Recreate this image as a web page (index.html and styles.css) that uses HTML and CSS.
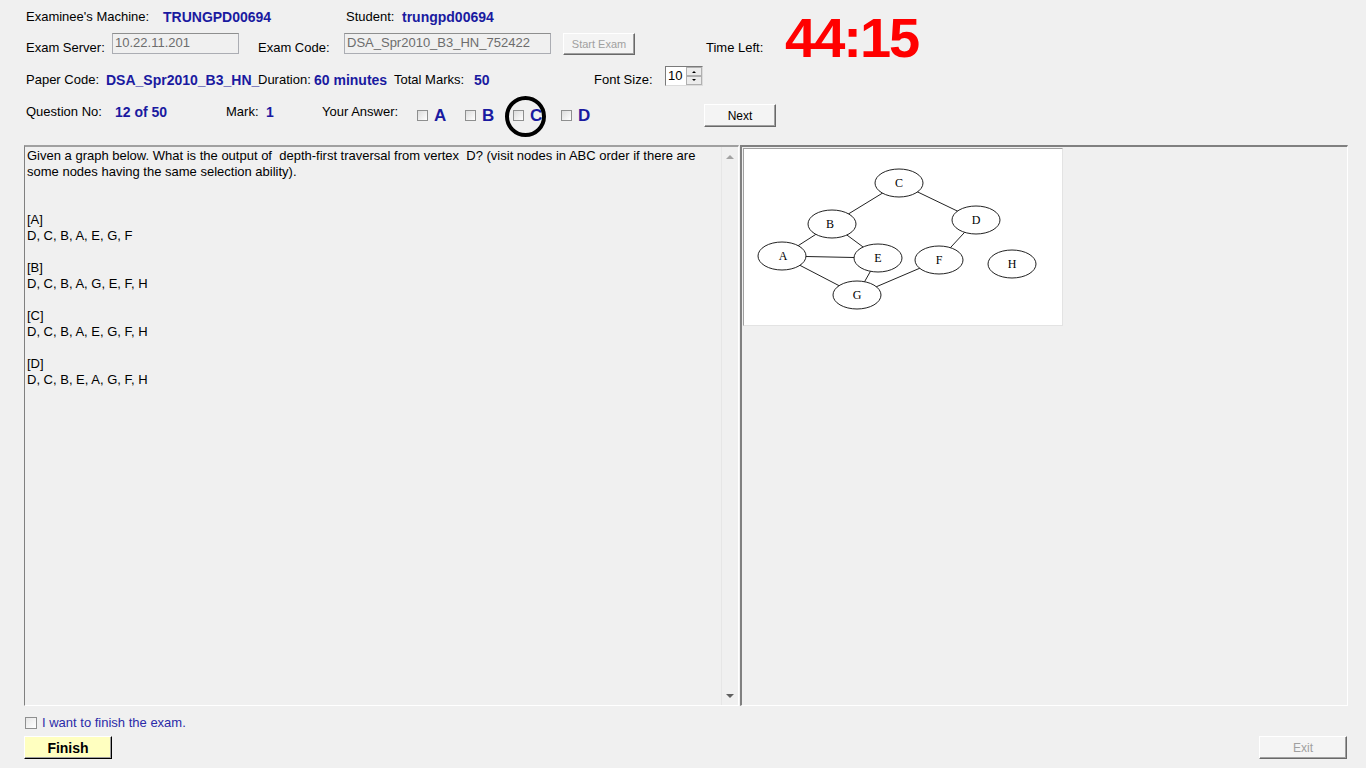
FILE: index.html
```html
<!DOCTYPE html>
<html>
<head>
<meta charset="utf-8">
<title>Exam Client</title>
<link rel="stylesheet" href="styles.css">
</head>
<body>
<div class="header">
  <div class="top">
    <div class="top-left">
      <div class="row r1">
        <span class="lbl w137">Examinee's Machine:</span>
        <span class="val w183">TRUNGPD00694</span>
        <span class="lbl w56">Student:</span>
        <span class="val">trungpd00694</span>
      </div>
      <div class="row r2">
        <span class="lbl low w86">Exam Server:</span>
        <span class="field w127">10.22.11.201</span>
        <span class="lbl low w86 ml19">Exam Code:</span>
        <span class="field w207">DSA_Spr2010_B3_HN_752422</span>
        <span class="btn btn-disabled w72 ml12">Start Exam</span>
        <span class="lbl low ml71">Time Left:</span>
      </div>
    </div>
    <div class="timer">44:15</div>
  </div>
  <div class="row r3">
    <span class="lbl low6 w80">Paper Code:</span>
    <span class="val low6 w152">DSA_Spr2010_B3_HN_</span>
    <span class="lbl low6 w56">Duration:</span>
    <span class="val low6 w80">60 minutes</span>
    <span class="lbl low6 w80">Total Marks:</span>
    <span class="val low6 w120">50</span>
    <span class="lbl low6 w71">Font Size:</span>
    <span class="spinner"><span class="spin-val">10</span><span class="spin-btns"><span class="spin-up"></span><span class="spin-down"></span></span></span>
  </div>
  <div class="row r4">
    <span class="lbl w89">Question No:</span>
    <span class="val w111">12 of 50</span>
    <span class="lbl w40">Mark:</span>
    <span class="val w56">1</span>
    <span class="lbl w95">Your Answer:</span>
    <span class="answer"><span class="cb"></span><span class="letter">A</span></span>
    <span class="answer"><span class="cb"></span><span class="letter">B</span></span>
    <span class="answer marked"><span class="cb"></span><span class="letter">C</span><span class="ring"></span></span>
    <span class="answer"><span class="cb"></span><span class="letter">D</span></span>
    <span class="btn w72 h23 ml95">Next</span>
  </div>
</div>

<div class="main">
  <div class="question">
    <div class="qtext">
      <p>Given a graph below. What is the output of&nbsp; depth-first traversal from vertex&nbsp; D? (visit nodes in ABC order if there are<br>some nodes having the same selection ability).</p>
      <p class="gap2">[A]<br>D, C, B, A, E, G, F</p>
      <p class="gap1">[B]<br>D, C, B, A, G, E, F, H</p>
      <p class="gap1">[C]<br>D, C, B, A, E, G, F, H</p>
      <p class="gap1">[D]<br>D, C, B, E, A, G, F, H</p>
    </div>
    <div class="scrollbar">
      <span class="arr-up"></span>
      <span class="arr-down"></span>
    </div>
  </div>
  <div class="picture">
    <div class="image">
      <svg width="318" height="176" viewBox="0 0 318 176" xmlns="http://www.w3.org/2000/svg">
        <g stroke="#222" stroke-width="1" fill="none">
          <line x1="155" y1="34" x2="88" y2="75"/>
          <line x1="155" y1="34" x2="232" y2="71"/>
          <line x1="88" y1="75" x2="38" y2="107"/>
          <line x1="88" y1="75" x2="134" y2="109"/>
          <line x1="38" y1="107" x2="134" y2="109"/>
          <line x1="38" y1="107" x2="113" y2="146"/>
          <line x1="134" y1="109" x2="113" y2="146"/>
          <line x1="232" y1="71" x2="195" y2="111"/>
          <line x1="195" y1="111" x2="113" y2="146"/>
        </g>
        <g stroke="#222" stroke-width="1" fill="#fff">
          <ellipse cx="155" cy="34" rx="24" ry="14"/>
          <ellipse cx="88" cy="75" rx="24" ry="14"/>
          <ellipse cx="232" cy="71" rx="24" ry="14"/>
          <ellipse cx="38" cy="107" rx="24" ry="14"/>
          <ellipse cx="134" cy="109" rx="24" ry="14"/>
          <ellipse cx="195" cy="111" rx="24" ry="14"/>
          <ellipse cx="268" cy="115" rx="24" ry="14"/>
          <ellipse cx="113" cy="146" rx="24" ry="14"/>
        </g>
        <g font-family="'Liberation Serif', serif" font-size="12" fill="#000" text-anchor="middle">
          <text x="155" y="38">C</text>
          <text x="86" y="79">B</text>
          <text x="232" y="75">D</text>
          <text x="39" y="111">A</text>
          <text x="134" y="113">E</text>
          <text x="195" y="115">F</text>
          <text x="268" y="119">H</text>
          <text x="113" y="150">G</text>
        </g>
      </svg>
    </div>
  </div>
</div>

<div class="footer">
  <div class="finish-row">
    <span class="cb cb-big"></span>
    <span class="finish-lbl">I want to finish the exam.</span>
  </div>
  <div class="btn-row">
    <span class="btn finish">Finish</span>
    <span class="btn btn-disabled exit">Exit</span>
  </div>
</div>
</body>
</html>
```

FILE: styles.css
```css
* { box-sizing: border-box; }
html, body {
  margin: 0;
  padding: 0;
  background: #f0f0f0;
  width: 1366px;
  height: 768px;
  overflow: hidden;
  font-family: "Liberation Sans", Arial, sans-serif;
  font-size: 13px;
  color: #000;
}
.header { padding-left: 26px; }
.top { display: flex; height: 56px; align-items: flex-start; }
.top-left { width: 759px; }
.row { display: flex; align-items: flex-start; white-space: nowrap; }
.r1 { margin-top: 9px; height: 16px; }
.r2 { margin-top: 8px; height: 22px; }
.r3 { margin-top: 10px; height: 20px; }
.r4 { margin-top: 18px; height: 23px; }

.lbl, .val { display: block; line-height: 16px; flex: none; }
.val { color: #1a1aa0; font-weight: bold; font-size: 14px; }
.low { margin-top: 7px; }
.low6 { margin-top: 6px; }

.w40 { width: 40px; } .w56 { width: 56px; } .w71 { width: 71px; } .w72 { width: 72px; }
.w80 { width: 80px; } .w86 { width: 86px; } .w89 { width: 89px; } .w95 { width: 95px; }
.w111 { width: 111px; } .w120 { width: 120px; } .w127 { width: 127px; } .w137 { width: 137px; }
.w152 { width: 152px; } .w183 { width: 183px; } .w207 { width: 207px; }
.ml12 { margin-left: 12px; } .ml19 { margin-left: 19px; } .ml71 { margin-left: 71px; } .ml95 { margin-left: 95px; }

.field {
  display: block;
  flex: none;
  height: 21px;
  border: 1px solid #abadb3;
  border-top-color: #8e8f8f;
  background: #f0f0f0;
  color: #6d6d6d;
  padding: 1px 0 0 2px;
  line-height: 16px;
}

.btn {
  display: flex;
  flex: none;
  align-items: center;
  justify-content: center;
  height: 22px;
  font-size: 12px;
  background: #f4f4f4;
  border: 1px solid;
  border-color: #ffffff #696969 #696969 #ffffff;
  box-shadow: inset -1px -1px 0 #a0a0a0;
  color: #000;
}
.h23 { height: 23px; }
.btn-disabled { color: #a0a0a0; font-size: 11px; }

.timer {
  flex: none;
  margin-top: 10px;
  font-size: 56px;
  line-height: 1;
  font-weight: bold;
  color: #ff0000;
  letter-spacing: -2px;
}

.spinner {
  display: flex;
  flex: none;
  width: 38px;
  height: 20px;
  border: 1px solid #7a7a7a;
  border-right-color: #dcdcdc;
  border-bottom-color: #dcdcdc;
  background: #fff;
}
.spin-val { flex: 1; font-size: 13px; line-height: 18px; padding-left: 2px; }
.spin-btns { display: flex; flex-direction: column; width: 16px; }
.spin-up, .spin-down {
  flex: 1;
  background: #ececec;
  border: 1px solid #b0b0b0;
  position: relative;
}
.spin-up::after, .spin-down::after {
  content: "";
  position: absolute;
  left: 5px;
  top: 3px;
  border-left: 2px solid transparent;
  border-right: 2px solid transparent;
}
.spin-up::after { border-bottom: 2px solid #000; }
.spin-down::after { border-top: 2px solid #000; top: 2px; }

.answer { display: flex; flex: none; width: 48px; align-items: flex-start; position: relative; }
.cb {
  display: block;
  flex: none;
  width: 11px;
  height: 11px;
  margin-top: 6px;
  border: 1px solid #8e8f8f;
  background: linear-gradient(135deg, #dcdcdc, #ffffff);
}
.letter {
  margin-left: 6px;
  margin-top: 2px;
  font-size: 17px;
  line-height: 20px;
  font-weight: bold;
  color: #1a1aa0;
}
.ring {
  position: absolute;
  left: -8px;
  top: -8px;
  width: 41px;
  height: 41px;
  border: 4px solid #000;
  border-radius: 50%;
}

.main {
  display: flex;
  margin: 18px 0 0 24px;
  height: 561px;
}
.question {
  display: flex;
  width: 715px;
  height: 561px;
  border-top: 2px solid #a0a0a0;
  border-left: 1px solid #808080;
  border-right: 1px solid #ffffff;
  border-bottom: 1px solid #ffffff;
}
.qtext { flex: 1; padding: 1px 0 0 2px; line-height: 16px; }
.qtext p { margin: 0; }
.qtext .gap2 { margin-top: 32px; }
.qtext .gap1 { margin-top: 16px; }
.scrollbar {
  width: 17px;
  position: relative;
  border-left: 1px solid #e6e6e6;
  background: #f0f0f0;
}
.arr-up, .arr-down {
  position: absolute;
  left: 4px;
  border-left: 4px solid transparent;
  border-right: 4px solid transparent;
}
.arr-up { top: 8px; border-bottom: 4px solid #a3a3a3; }
.arr-down { bottom: 7px; border-top: 4px solid #606060; }

.picture {
  width: 608px;
  height: 561px;
  margin-left: 1px;
  border-top: 2px solid #808080;
  border-left: 2px solid #808080;
  border-right: 1px solid #ffffff;
  border-bottom: 1px solid #ffffff;
}
.image {
  width: 320px;
  height: 178px;
  margin: 1px 0 0 1px;
  background: #fff;
  border-right: 1px solid #e3e3e3;
  border-bottom: 1px solid #e3e3e3;
  border-left: 1px solid #a0a0a0;
  border-top: 1px solid #a0a0a0;
}
.image svg { display: block; }

.footer { padding: 0 19px 0 24px; }
.finish-row { display: flex; align-items: center; margin: 11px 0 0 1px; height: 12px; }
.cb-big { width: 12px; height: 12px; margin-top: 0; background: linear-gradient(135deg, #e6e6e6, #ffffff); }
.finish-lbl { margin-left: 5px; color: #2b2ba8; line-height: 16px; }
.btn-row { display: flex; justify-content: space-between; margin-top: 7px; }
.finish {
  width: 88px;
  height: 23px;
  background: #ffffc0;
  font-weight: bold;
  font-size: 14px;
  border-color: #ffffff #000000 #000000 #ffffff;
  box-shadow: inset -1px -1px 0 #a0a0a0;
}
.exit { width: 88px; height: 23px; font-size: 12px; }
```
